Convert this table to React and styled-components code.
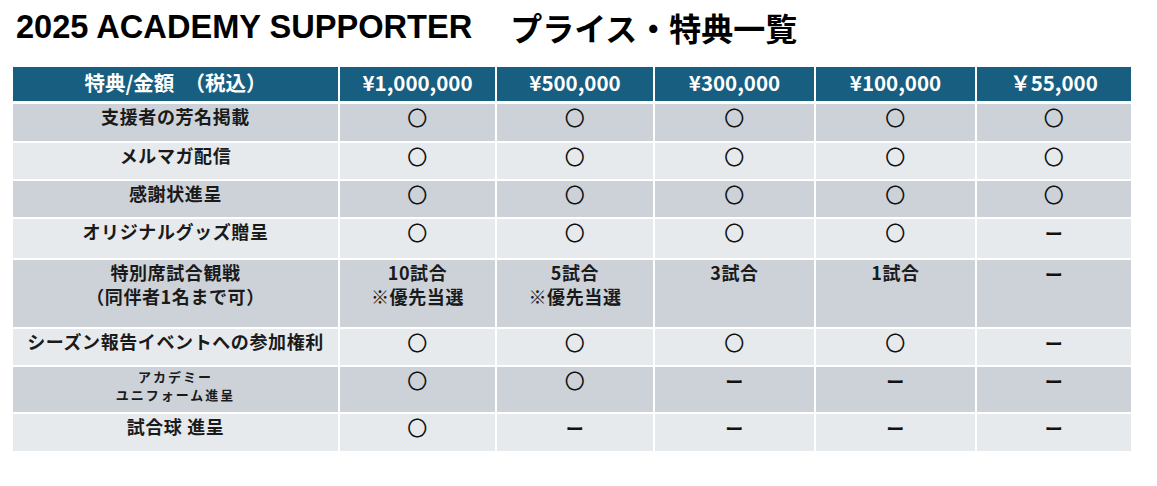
import React from "react";
import styled, { createGlobalStyle } from "styled-components";

const GlobalStyle = createGlobalStyle`
  html, body { margin: 0; padding: 0; background: #ffffff; }
  body { font-family: "Noto Sans CJK JP", "Noto Sans", sans-serif; color: #111; }
`;

const Page = styled.div`
  width: 1157px;
  height: 486px;
  box-sizing: border-box;
  padding: 6px 0 0 13px;
  background: #ffffff;
`;

const Title = styled.h1`
  margin: 0 0 19px 3px;
  height: 42px;
  display: flex;
  align-items: center;
  font-family: "Liberation Sans", "Noto Sans CJK JP", sans-serif;
  font-weight: 700;
  font-size: 32.6px;
  color: #000;
  white-space: nowrap;
`;

const TitleJa = styled.span`
  margin-left: 38px;
  font-family: "Noto Sans CJK JP", sans-serif;
  font-size: 32px;
  font-weight: 700;
`;

const Table = styled.div`
  width: 1118px;
  display: flex;
  flex-direction: column;
  gap: 2px;
  background: #ffffff;
`;

const cols = "325px 155px 156px 159px 159px 154px";

const HeaderRow = styled.div`
  display: grid;
  grid-template-columns: ${cols};
  column-gap: 2px;
  height: 34px;
  margin-bottom: 1px;
`;

const HeaderCell = styled.div`
  background: #175e80;
  color: #ffffff;
  display: flex;
  align-items: center;
  justify-content: center;
  padding-bottom: 4px;
  box-sizing: border-box;
  font-weight: 700;
  font-size: 20.5px;
  line-height: 1;
  white-space: nowrap;
`;

const Row = styled.div`
  display: grid;
  grid-template-columns: ${cols};
  column-gap: 2px;
  height: ${(p) => p.$h}px;
`;

const Cell = styled.div`
  background: ${(p) => (p.$dark ? "#cdd2d9" : "#e7eaed")};
  display: flex;
  flex-direction: column;
  align-items: center;
  justify-content: flex-start;
  padding-top: 1px;
  box-sizing: border-box;
  font-weight: 700;
  font-size: 18px;
  letter-spacing: 0.6px;
  line-height: 24px;
  color: #1a1a1a;
  white-space: nowrap;
`;

const TextLine = styled.div`
  margin-top: ${(p) => (p.$first ? "-1px" : "0")};
`;

const SmallLabel = styled.div`
  font-size: 13px;
  line-height: 18px;
  letter-spacing: 2px;
`;

const Mark = styled.span`
  font-weight: 400;
  font-size: 20px;
  line-height: 24px;
  margin-top: 1px;
  color: #111;
`;

const Dash = styled.span`
  font-weight: 700;
  font-size: 18px;
  line-height: 24px;
  margin-top: 1px;
  color: #111;
`;

const prices = ["¥1,000,000", "¥500,000", "¥300,000", "¥100,000", "￥55,000"];

const O = "o";
const X = "x";

const rows = [
  { label: ["支援者の芳名掲載"], h: 37, v: [O, O, O, O, O] },
  { label: ["メルマガ配信"], h: 36, v: [O, O, O, O, O] },
  { label: ["感謝状進呈"], h: 36, v: [O, O, O, O, O] },
  { label: ["オリジナルグッズ贈呈"], h: 39, v: [O, O, O, O, X] },
  {
    label: ["特別席試合観戦", "（同伴者1名まで可）"],
    h: 67,
    v: [["10試合", "※優先当選"], ["5試合", "※優先当選"], ["3試合"], ["1試合"], X],
  },
  { label: ["シーズン報告イベントへの参加権利"], h: 36, v: [O, O, O, O, X] },
  { label: ["アカデミー", "ユニフォーム進呈"], small: true, h: 45, v: [O, O, X, X, X] },
  { label: ["試合球 進呈"], h: 37, v: [O, X, X, X, X] },
];

function Value({ v }) {
  if (v === O) return <Mark>〇</Mark>;
  if (v === X) return <Dash>ー</Dash>;
  return v.map((t, k) => (
    <TextLine key={t} $first={k === 0}>
      {t}
    </TextLine>
  ));
}

export default function App() {
  return (
    <>
      <GlobalStyle />
      <Page>
        <Title>
          2025 ACADEMY SUPPORTER<TitleJa>プライス・特典一覧</TitleJa>
        </Title>
        <Table>
          <HeaderRow>
            <HeaderCell>特典/金額　（税込）</HeaderCell>
            {prices.map((p) => (
              <HeaderCell key={p}>{p}</HeaderCell>
            ))}
          </HeaderRow>
          {rows.map((r, i) => (
            <Row key={i} $h={r.h}>
              <Cell $dark={i % 2 === 0}>
                {r.small
                  ? r.label.map((t) => <SmallLabel key={t}>{t}</SmallLabel>)
                  : r.label.map((t, k) => (
                      <TextLine key={t} $first={k === 0}>
                        {t}
                      </TextLine>
                    ))}
              </Cell>
              {r.v.map((v, j) => (
                <Cell key={j} $dark={i % 2 === 0}>
                  <Value v={v} />
                </Cell>
              ))}
            </Row>
          ))}
        </Table>
      </Page>
    </>
  );
}
